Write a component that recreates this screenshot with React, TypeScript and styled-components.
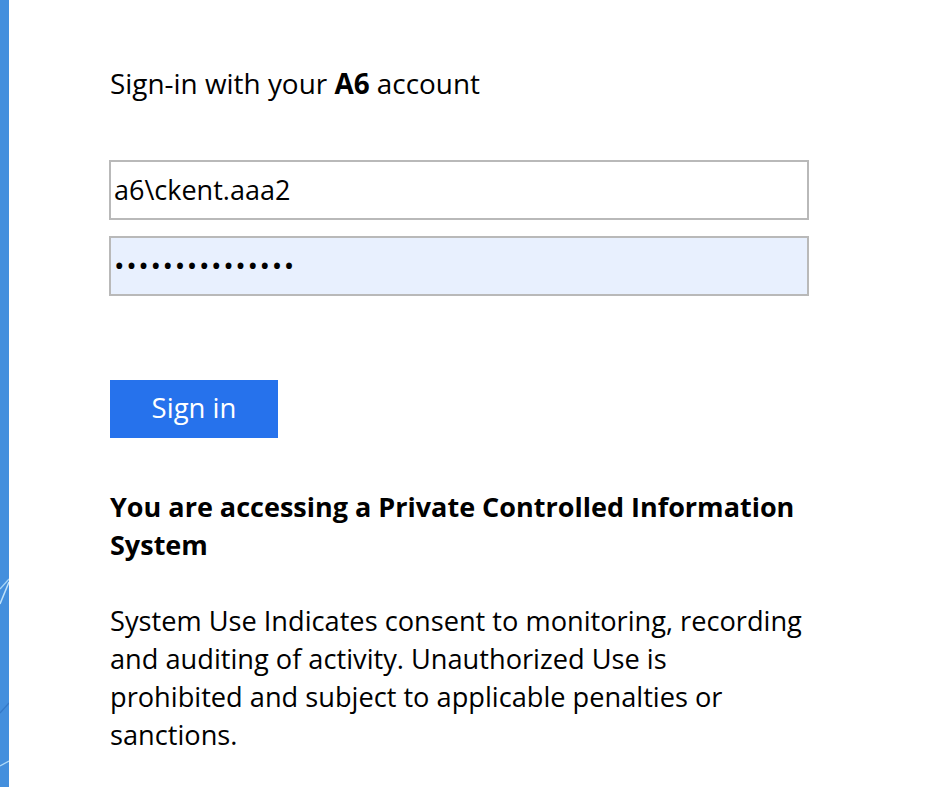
import React from "react";
import styled, { createGlobalStyle } from "styled-components";

const Global = createGlobalStyle`
  html, body { margin: 0; padding: 0; background: #ffffff; }
  body { font-family: "Open Sans", "Noto Sans", sans-serif; color: #000; }
  * { box-sizing: border-box; }
`;

const Page = styled.div`
  display: flex;
  min-height: 787px;
  height: 100vh;
  overflow: hidden;
`;

const Strip = styled.div`
  width: 9px;
  flex: 0 0 9px;
  background: #448fdd;
  position: relative;
  overflow: hidden;
`;

const StripArt = styled.svg`
  position: absolute;
  left: 0;
  top: 0;
  width: 9px;
  height: 787px;
`;

const Main = styled.main`
  flex: 1;
  padding: 64px 0 0 100px;
`;

const Column = styled.div`
  width: 700px;
  display: flex;
  flex-direction: column;
`;

const Title = styled.h1`
  margin: 0;
  font-size: 27.9px;
  line-height: 38px;
  font-weight: 400;
  padding-left: 1px;
  b { font-weight: 700; }
`;

const Fields = styled.div`
  margin-top: 58px;
  display: flex;
  flex-direction: column;
  gap: 16px;
`;

const Field = styled.input<{ $filled?: boolean }>`
  width: 700px;
  height: 60px;
  border: 2px solid #b9b9b9;
  border-radius: 0;
  background: ${(p) => (p.$filled ? "#e8f0fe" : "#ffffff")};
  font-family: "Open Sans", "Noto Sans", sans-serif;
  font-size: ${(p) => (p.$filled ? "28px" : "27px")};
  letter-spacing: ${(p) => (p.$filled ? "1.6px" : "0")};
  color: #000;
  padding: 0 0 2px 3px;
  outline: none;
`;

const Button = styled.button`
  margin-top: 84px;
  width: 168px;
  height: 58px;
  border: none;
  background: #2672ec;
  color: #fff;
  font-family: "Open Sans", "Noto Sans", sans-serif;
  font-size: 27.5px;
  padding: 0 0 4px;
  margin-left: 1px;
  cursor: pointer;
`;

const Heading = styled.h2`
  margin: 50px 0 0;
  font-size: 27px;
  line-height: 38px;
  font-weight: 700;
  padding-left: 1px;
`;

const Notice = styled.p`
  margin: 38px 0 0;
  font-size: 27.2px;
  line-height: 38px;
  font-weight: 400;
  padding-left: 1px;
`;

export default function App() {
  return (
    <>
      <Global />
      <Page>
        <Strip>
          <StripArt viewBox="0 0 9 787" preserveAspectRatio="none">
            <line x1="0" y1="589" x2="9" y2="579" stroke="#a8d6f7" strokeWidth="1.3" />
            <line x1="0" y1="604" x2="9" y2="582" stroke="#bfe2fa" strokeWidth="1.5" />
            <line x1="0" y1="713" x2="9" y2="703" stroke="#3579c8" strokeWidth="1.2" />
            <line x1="0" y1="766" x2="9" y2="761" stroke="#b0daf7" strokeWidth="1.3" />
          </StripArt>
        </Strip>
        <Main>
          <Column>
            <Title>
              Sign-in with your <b>A6</b> account
            </Title>
            <Fields>
              <Field type="text" defaultValue="a6\ckent.aaa2" readOnly />
              <Field type="password" defaultValue="aaaaaaaaaaaaaaa" readOnly $filled />
            </Fields>
            <Button type="button">Sign in</Button>
            <Heading>You are accessing a Private Controlled Information System</Heading>
            <Notice>
              System Use Indicates consent to monitoring, recording
              <br />
              and auditing of activity. Unauthorized Use is
              <br />
              prohibited and subject to applicable penalties or
              <br />
              sanctions.
            </Notice>
          </Column>
        </Main>
      </Page>
    </>
  );
}
